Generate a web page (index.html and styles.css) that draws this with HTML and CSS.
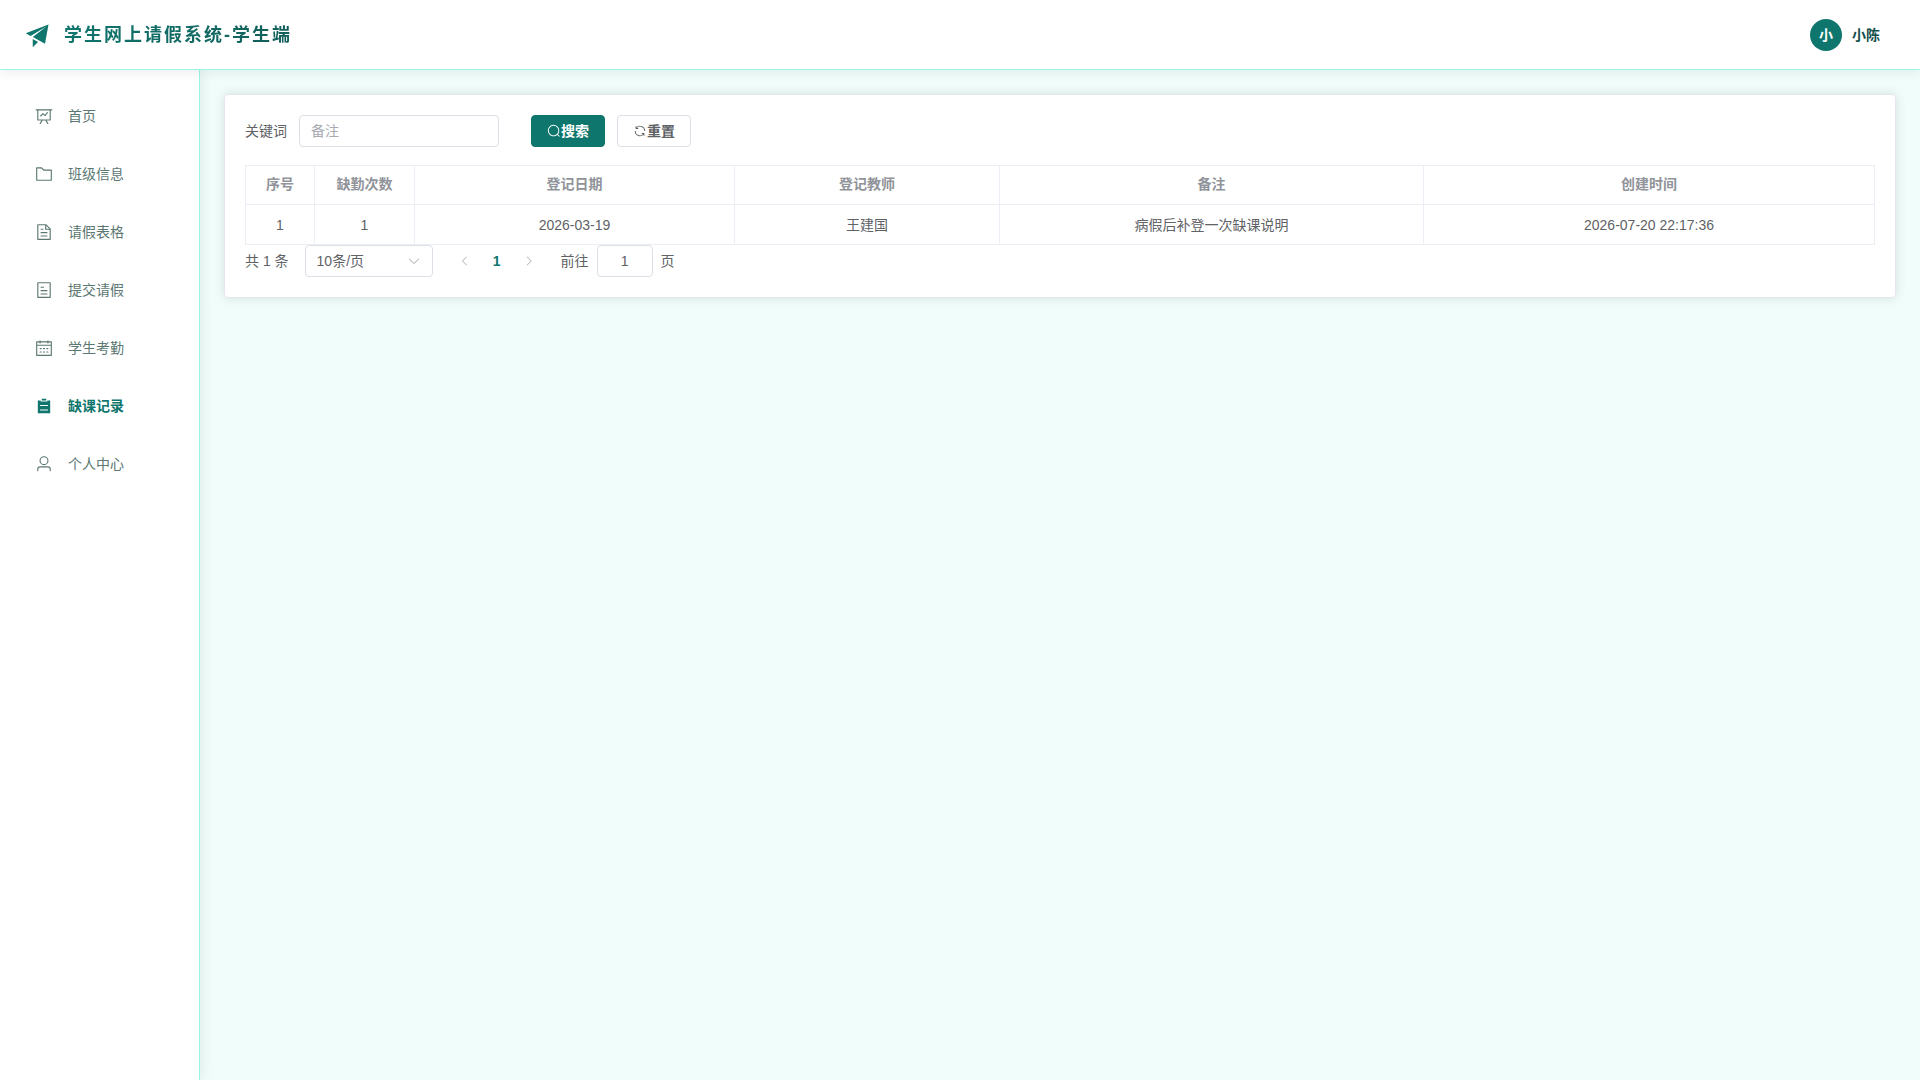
FILE: index.html
```html
<!DOCTYPE html>
<html lang="zh-CN">
    <head>
        <meta charset="UTF-8">
        <title>学生网上请假系统-学生端</title>
        <link rel="stylesheet" href="styles.css">
    </head>

    <body>
        <header class="header">
            <div class="logo">
                <svg class="logo-icon" viewBox="0 0 1024 1024"><path d="m64 448 832-320-128 704-446.08-243.328L832 192 242.816 545.536zm256 512V657.024L512 768z"/></svg>
                <h1 class="title">学生网上请假系统-学生端</h1>
            </div>
            <div class="user">
                <span class="avatar">小</span>
                <span class="user-name">小陈</span>
            </div>
        </header>

        <div class="container">
            <nav class="aside">
                <a href="#" class="menu-item">
                    <svg viewBox="0 0 1024 1024"><path d="M359.168 768H160a32 32 0 0 1-32-32V192H64a32 32 0 0 1 0-64h896a32 32 0 1 1 0 64h-64v544a32 32 0 0 1-32 32H665.216l110.848 192h-73.856L591.36 768H433.024L322.176 960H248.32zM832 192H192v512h640zM342.656 534.656a32 32 0 1 1-45.312-45.312L444.992 341.76l125.44 94.08L679.04 300.032a32 32 0 1 1 49.92 39.936L581.632 524.224 451.008 426.24z"/></svg>
                    <span>首页</span>
                </a>
                <a href="#" class="menu-item">
                    <svg viewBox="0 0 1024 1024"><path d="M128 192v640h768V320H485.76L357.504 192zm-32-64h287.872l128.384 128H928a32 32 0 0 1 32 32v576a32 32 0 0 1-32 32H96a32 32 0 0 1-32-32V160a32 32 0 0 1 32-32"/></svg>
                    <span>班级信息</span>
                </a>
                <a href="#" class="menu-item">
                    <svg viewBox="0 0 1024 1024"><path d="M832 384H576V128H192v768h640zm-26.496-64L640 154.496V320zM160 64h480l256 256v608a32 32 0 0 1-32 32H160a32 32 0 0 1-32-32V96a32 32 0 0 1 32-32m160 448h384v64H320zm0-192h160v64H320zm0 384h384v64H320z"/></svg>
                    <span>请假表格</span>
                </a>
                <a href="#" class="menu-item">
                    <svg viewBox="0 0 1024 1024"><path d="M192 128v768h640V128zm-32-64h704a32 32 0 0 1 32 32v832a32 32 0 0 1-32 32H160a32 32 0 0 1-32-32V96a32 32 0 0 1 32-32m160 448h384v64H320zm0-192h192v64H320zm0 384h384v64H320z"/></svg>
                    <span>提交请假</span>
                </a>
                <a href="#" class="menu-item">
                    <svg viewBox="0 0 1024 1024"><path d="M128 384v512h768V192H768v32a32 32 0 1 1-64 0v-32H320v32a32 32 0 0 1-64 0v-32H128v128h768v64zm192-256h384V96a32 32 0 1 1 64 0v32h160a32 32 0 0 1 32 32v768a32 32 0 0 1-32 32H96a32 32 0 0 1-32-32V160a32 32 0 0 1 32-32h160V96a32 32 0 0 1 64 0zm-32 384h64a32 32 0 0 1 0 64h-64a32 32 0 0 1 0-64m0 192h64a32 32 0 1 1 0 64h-64a32 32 0 1 1 0-64m192-192h64a32 32 0 0 1 0 64h-64a32 32 0 0 1 0-64m0 192h64a32 32 0 1 1 0 64h-64a32 32 0 1 1 0-64m192-192h64a32 32 0 1 1 0 64h-64a32 32 0 1 1 0-64m0 192h64a32 32 0 1 1 0 64h-64a32 32 0 1 1 0-64"/></svg>
                    <span>学生考勤</span>
                </a>
                <a href="#" class="menu-item active">
                    <svg viewBox="0 0 1024 1024"><path d="M704 192h160v736H160V192h160v64h384zM288 512h448v-64H288zm0 256h448v-64H288zm96-576V96h256v96z"/></svg>
                    <span>缺课记录</span>
                </a>
                <a href="#" class="menu-item">
                    <svg viewBox="0 0 1024 1024"><path d="M512 512a192 192 0 1 0 0-384 192 192 0 0 0 0 384m0 64a256 256 0 1 1 0-512 256 256 0 0 1 0 512m320 320v-96a96 96 0 0 0-96-96H288a96 96 0 0 0-96 96v96a32 32 0 1 1-64 0v-96a160 160 0 0 1 160-160h448a160 160 0 0 1 160 160v96a32 32 0 1 1-64 0"/></svg>
                    <span>个人中心</span>
                </a>
            </nav>

            <main class="main">
                <div class="card">
                    <form class="search-form" onsubmit="event.preventDefault();">
                        <label for="keyword">关键词</label>
                        <input type="text" id="keyword" class="input keyword" placeholder="备注">
                        <button type="submit" class="btn primary">
                            <svg viewBox="0 0 1024 1024"><path d="m795.904 750.72 124.992 124.928a32 32 0 0 1-45.248 45.248L750.656 795.904a416 416 0 1 1 45.248-45.248zM480 832a352 352 0 1 0 0-704 352 352 0 0 0 0 704"/></svg>
                            <span>搜索</span>
                        </button>
                        <button type="reset" class="btn">
                            <svg viewBox="0 0 1024 1024"><path d="M771.776 794.88A384 384 0 0 1 128 512h64a320 320 0 0 0 555.712 216.448H654.72a32 32 0 1 1 0-64h149.056a32 32 0 0 1 32 32v148.928a32 32 0 1 1-64 0v-50.56zM276.288 295.616h92.992a32 32 0 0 1 0 64H220.16a32 32 0 0 1-32-32V178.56a32 32 0 0 1 64 0v50.56A384 384 0 0 1 896.128 512h-64a320 320 0 0 0-555.776-216.384z"/></svg>
                            <span>重置</span>
                        </button>
                    </form>

                    <table class="table">
                        <colgroup>
                            <col class="col-index">
                            <col class="col-count">
                            <col class="col-date">
                            <col class="col-teacher">
                            <col class="col-remark">
                            <col>
                        </colgroup>
                        <thead>
                            <tr>
                                <th>序号</th>
                                <th>缺勤次数</th>
                                <th>登记日期</th>
                                <th>登记教师</th>
                                <th>备注</th>
                                <th>创建时间</th>
                            </tr>
                        </thead>
                        <tbody>
                            <tr>
                                <td>1</td>
                                <td>1</td>
                                <td>2026-03-19</td>
                                <td>王建国</td>
                                <td>病假后补登一次缺课说明</td>
                                <td>2026-07-20 22:17:36</td>
                            </tr>
                        </tbody>
                    </table>

                    <div class="pagination">
                        <span>共 1 条</span>
                        <div class="size-select">
                            <select class="input" aria-label="每页条数">
                                <option>10条/页</option>
                                <option>20条/页</option>
                                <option>50条/页</option>
                            </select>
                            <svg viewBox="0 0 1024 1024"><path d="M831.872 340.864 512 652.672 192.128 340.864a30.592 30.592 0 0 0-42.752 0 29.12 29.12 0 0 0 0 41.6L489.664 714.24a32 32 0 0 0 44.672 0l340.288-331.712a29.12 29.12 0 0 0 0-41.728 30.592 30.592 0 0 0-42.752 0z"/></svg>
                        </div>
                        <div class="pager">
                            <button type="button" disabled aria-label="上一页">
                                <svg viewBox="0 0 1024 1024"><path d="M609.408 149.376 277.76 489.6a32 32 0 0 0 0 44.672l331.648 340.352a29.12 29.12 0 0 0 41.728 0 30.592 30.592 0 0 0 0-42.752L339.264 511.936l311.872-319.872a30.592 30.592 0 0 0 0-42.688 29.12 29.12 0 0 0-41.728 0"/></svg>
                            </button>
                            <button type="button" class="current">1</button>
                            <button type="button" disabled aria-label="下一页">
                                <svg viewBox="0 0 1024 1024"><path d="M340.864 149.312a30.592 30.592 0 0 0 0 42.752L652.736 512 340.864 831.872a30.592 30.592 0 0 0 0 42.752 29.12 29.12 0 0 0 41.728 0L714.24 534.336a32 32 0 0 0 0-44.672L382.592 149.376a29.12 29.12 0 0 0-41.728 0z"/></svg>
                            </button>
                        </div>
                        <div class="jump">
                            <label for="page">前往</label>
                            <input type="text" id="page" class="input page" value="1">
                            <span>页</span>
                        </div>
                    </div>
                </div>
            </main>
        </div>
    </body>
</html>
```
FILE: styles.css
```css
* {
    box-sizing: border-box;
}

body {
    margin: 0;
    min-height: 100vh;
    display: flex;
    flex-direction: column;
    font-family: "Liberation Sans", "Noto Sans CJK SC", sans-serif;
    font-size: 14px;
    line-height: 22px;
    color: #606266;
    background: #f0fdfa;
}

button, input, select {
    font: inherit;
    color: inherit;
}

svg {
    fill: currentColor;
    flex-shrink: 0;
}

/* header */
.header {
    position: relative;
    z-index: 2;
    height: 70px;
    padding: 0 40px 0 24px;
    display: flex;
    align-items: center;
    justify-content: space-between;
    background: #fff;
    border-bottom: 1px solid #99f6e4;
    box-shadow: 0 2px 12px rgba(0, 0, 0, 0.08);
}

.logo {
    display: flex;
    align-items: center;
    gap: 12px;
    color: #0f766e;
}

.logo-icon {
    width: 28px;
    height: 28px;
}

.title {
    margin: 0;
    font-size: 18px;
    letter-spacing: 2px;
    background: linear-gradient(135deg, #0f766e, #115e59);
    -webkit-background-clip: text;
    background-clip: text;
    color: transparent;
}

.user {
    display: flex;
    align-items: center;
    gap: 10px;
    font-weight: bold;
}

.avatar {
    width: 32px;
    height: 32px;
    border-radius: 50%;
    display: flex;
    align-items: center;
    justify-content: center;
    background: #0f766e;
    color: #fff;
}

.user-name {
    color: #134e4a;
}

.container {
    flex: 1;
    display: flex;
}

/* sidebar */
.aside {
    width: 200px;
    padding: 21px 12px;
    display: flex;
    flex-direction: column;
    gap: 8px;
    background: #fff;
    border-right: 1px solid #99f6e4;
    box-shadow: 2px 0 12px rgba(0, 0, 0, 0.08);
}

.menu-item {
    height: 50px;
    padding: 0 23px;
    display: flex;
    align-items: center;
    gap: 15px;
    color: #5b7772;
    text-decoration: none;
}

.menu-item svg {
    width: 18px;
    height: 18px;
}

.menu-item.active {
    color: #0f766e;
    font-weight: bold;
}

/* content */
.main {
    flex: 1;
    padding: 24px;
}

.card {
    padding: 20px;
    background: #fff;
    border: 1px solid #e4e7ed;
    border-radius: 4px;
    box-shadow: 0 0 12px rgba(0, 0, 0, 0.12);
}

.search-form {
    display: flex;
    align-items: center;
    gap: 12px;
    margin-bottom: 18px;
}

.input {
    height: 32px;
    padding: 0 11px;
    border: 1px solid #dcdfe6;
    border-radius: 4px;
    background: #fff;
    outline: none;
}

.input::placeholder {
    color: #a8abb2;
}

.keyword {
    width: 200px;
    margin-right: 20px;
}

.btn {
    height: 32px;
    padding: 0 15px;
    display: flex;
    align-items: center;
    border: 1px solid #dcdfe6;
    border-radius: 4px;
    background: #fff;
    font-weight: bold;
    cursor: pointer;
}

.btn svg {
    width: 14px;
    height: 14px;
}

.btn.primary {
    background: #0f766e;
    border-color: #0f766e;
    color: #fff;
}

.table {
    width: 100%;
    table-layout: fixed;
    border-spacing: 0;
    border-top: 1px solid #ebeef5;
    border-left: 1px solid #ebeef5;
}

.table th, .table td {
    height: 40px;
    padding: 8px 12px;
    text-align: center;
    border-right: 1px solid #ebeef5;
    border-bottom: 1px solid #ebeef5;
}

.table th {
    height: 39px;
    padding: 7px 12px 9px;
    color: #909399;
}

.col-index {
    width: 69px;
}

.col-count {
    width: 100px;
}

.col-date {
    width: 320px;
}

.col-teacher {
    width: 265px;
}

.col-remark {
    width: 424px;
}

/* pagination */
.pagination {
    display: flex;
    align-items: center;
    gap: 16px;
}

.size-select {
    position: relative;
    width: 128px;
}

.size-select select {
    width: 100%;
    appearance: none;
}

.size-select svg {
    position: absolute;
    top: 9px;
    right: 12px;
    width: 14px;
    height: 14px;
    color: #a8abb2;
    pointer-events: none;
}

.pager {
    display: flex;
}

.pager button {
    width: 32px;
    height: 32px;
    padding: 0;
    display: flex;
    align-items: center;
    justify-content: center;
    border: none;
    background: none;
}

.pager button:disabled {
    color: #a8abb2;
}

.pager svg {
    width: 12px;
    height: 12px;
}

.pager .current {
    color: #0f766e;
    font-weight: bold;
}

.jump {
    display: flex;
    align-items: center;
    gap: 8px;
}

.page {
    width: 56px;
    text-align: center;
}
```
